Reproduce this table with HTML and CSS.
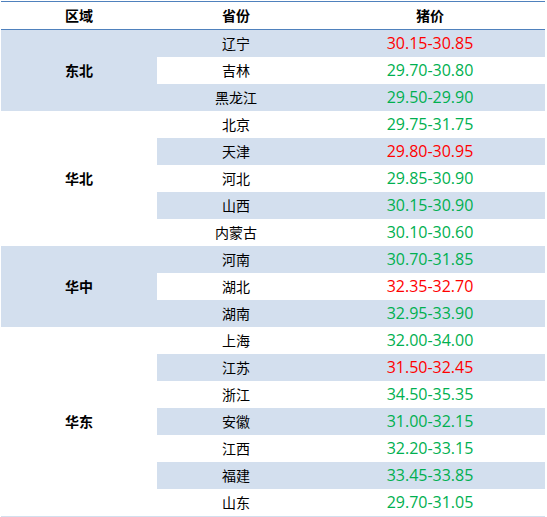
FILE: index.html
```html
<!DOCTYPE html>
<html lang="zh">
<head>
<meta charset="utf-8">
<link rel="stylesheet" href="styles.css">
</head>
<body>
<div class="wrap">
<table class="price-table">
  <thead>
    <tr><th class="c1">区域</th><th class="c2">省份</th><th class="c3">猪价</th></tr>
  </thead>
  <tbody>
    <tr class="band"><td class="region band" rowspan="3">东北</td><td>辽宁</td><td class="up">30.15-30.85</td></tr>
    <tr><td>吉林</td><td class="dn">29.70-30.80</td></tr>
    <tr class="band"><td>黑龙江</td><td class="dn">29.50-29.90</td></tr>
    <tr><td class="region" rowspan="5">华北</td><td>北京</td><td class="dn">29.75-31.75</td></tr>
    <tr class="band"><td>天津</td><td class="up">29.80-30.95</td></tr>
    <tr><td>河北</td><td class="dn">29.85-30.90</td></tr>
    <tr class="band"><td>山西</td><td class="dn">30.15-30.90</td></tr>
    <tr><td>内蒙古</td><td class="dn">30.10-30.60</td></tr>
    <tr class="band"><td class="region band" rowspan="3">华中</td><td>河南</td><td class="dn">30.70-31.85</td></tr>
    <tr><td>湖北</td><td class="up">32.35-32.70</td></tr>
    <tr class="band"><td>湖南</td><td class="dn">32.95-33.90</td></tr>
    <tr><td class="region" rowspan="7">华东</td><td>上海</td><td class="dn">32.00-34.00</td></tr>
    <tr class="band"><td>江苏</td><td class="up">31.50-32.45</td></tr>
    <tr><td>浙江</td><td class="dn">34.50-35.35</td></tr>
    <tr class="band"><td>安徽</td><td class="dn">31.00-32.15</td></tr>
    <tr><td>江西</td><td class="dn">32.20-33.15</td></tr>
    <tr class="band"><td>福建</td><td class="dn">33.45-33.85</td></tr>
    <tr><td>山东</td><td class="dn">29.70-31.05</td></tr>
  </tbody>
</table>
</div>
</body>
</html>
```
FILE: styles.css
```css
html, body {
  margin: 0;
  padding: 0;
  background: #ffffff;
}
.wrap {
  padding: 1px 2px 0 1px;
}
.price-table {
  width: 544px;
  border-collapse: collapse;
  table-layout: fixed;
  font-family: "Noto Sans CJK SC", sans-serif;
  font-size: 14px;
  color: #000;
  border-bottom: 1px solid #d3dfee;
}
.price-table th,
.price-table td {
  padding: 0;
  text-align: center;
  vertical-align: middle;
  height: 27px;
  line-height: 27px;
}
.price-table thead tr {
  border-top: 1px solid #4f81bd;
  border-bottom: 1px solid #4f81bd;
}
.price-table th {
  font-weight: bold;
  color: #000;
}
.c1 { width: 156px; }
.c2 { width: 158px; }
.c3 { width: 230px; }
.price-table tr.band td { background: #d3dfee; }
.price-table td.region { background: #ffffff; font-weight: bold; }
.price-table td.region.band { background: #d3dfee; }
.price-table td.up,
.price-table td.dn {
  font-family: "Open Sans", sans-serif;
  font-size: 16px;
}
.up { color: #ff0000; }
.dn { color: #00b050; }
```
